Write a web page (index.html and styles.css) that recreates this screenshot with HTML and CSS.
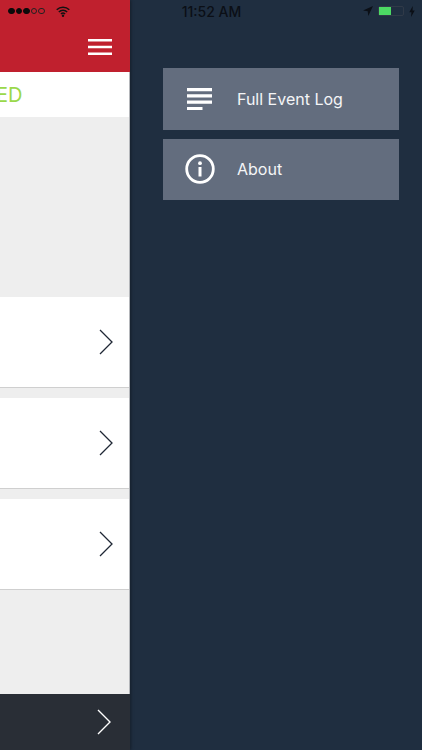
FILE: index.html
```
<!DOCTYPE html>
<html lang="en">
<head>
<meta charset="utf-8">
<title>Menu</title>
<link rel="stylesheet" href="styles.css">
</head>
<body>
<div class="app">
  <section class="main">
    <header class="topbar">
      <svg class="burger" width="24" height="16" viewBox="0 0 24 16"><path d="M0 1.300h24M0 8h24M0 14.700h24" stroke="#fff" stroke-width="2.500" fill="none"/></svg>
    </header>
    <div class="status-row"><span class="status-text">ED</span></div>
    <div class="list">
      <div class="item"><svg class="chev" width="14" height="26" viewBox="0 0 14 26"><path d="M1 1l12 12L1 25" stroke="#1f2735" stroke-width="1.300" fill="none"/></svg></div>
      <div class="item"><svg class="chev" width="14" height="26" viewBox="0 0 14 26"><path d="M1 1l12 12L1 25" stroke="#1f2735" stroke-width="1.300" fill="none"/></svg></div>
      <div class="item"><svg class="chev" width="14" height="26" viewBox="0 0 14 26"><path d="M1 1l12 12L1 25" stroke="#1f2735" stroke-width="1.300" fill="none"/></svg></div>
    </div>
    <footer class="footbar"><svg class="chev" width="14" height="26" viewBox="0 0 14 26"><path d="M1 1l12 12L1 25" stroke="#fff" stroke-width="1.400" fill="none"/></svg></footer>
  </section>
  <nav class="drawer">
    <a class="menu-item">
      <span class="menu-icon"><svg width="25" height="22" viewBox="0 0 25 22"><path d="M0 1.600h25M0 7.900h25M0 14.200h25M0 20.500h15.500" stroke="#fff" stroke-width="3.200" fill="none"/></svg></span>
      <span class="menu-label">Full Event Log</span>
    </a>
    <a class="menu-item">
      <span class="menu-icon"><svg width="30" height="30" viewBox="0 0 30 30"><circle cx="15" cy="15" r="13.300" stroke="#fff" stroke-width="2.800" fill="none"/><rect x="13.500" y="13" width="3" height="9.500" fill="#fff"/><circle cx="15" cy="9.200" r="1.900" fill="#fff"/></svg></span>
      <span class="menu-label">About</span>
    </a>
  </nav>
</div>
<div class="statusbar">
  <div class="sb-left">
    <span class="signal"><i class="dot"></i><i class="dot"></i><i class="dot"></i><i class="dot off"></i><i class="dot off"></i></span>
    <svg width="14" height="11" viewBox="0 0 14 11"><path d="M.7 3.800a9 9 0 0 1 12.600 0M2.800 5.900a6 6 0 0 1 8.400 0M4.900 8a3 3 0 0 1 4.200 0" stroke="#111" stroke-width="1.400" fill="none"/><circle cx="7" cy="9.700" r="1.200" fill="#111"/></svg>
  </div>
  <span class="sb-time">11:52 AM</span>
  <div class="sb-right">
    <svg width="10" height="10" viewBox="0 0 10 10"><path d="M10 0L0 4.600l4.700.6.600 4.800z" fill="#0b0f16"/></svg>
    <span class="battery"><span class="battery-fill"></span></span>
    <svg width="6" height="11" viewBox="0 0 5 10"><path d="M3.200 0L0 5.600h2L1.600 10 5 4.200H3z" fill="#0b0f16"/></svg>
  </div>
</div>
</body>
</html>
```
FILE: styles.css
```
* { box-sizing: border-box; }
html, body { margin: 0; padding: 0; height: 100%; }
body { width: 422px; height: 750px; overflow: hidden; position: relative; background: #1f2e40; font-family: Inter, Roboto, "Liberation Sans", sans-serif; }
.app { display: flex; height: 750px; }
.main { width: 130px; flex: none; display: flex; flex-direction: column; background: #eeeeee; box-shadow: 1px 0 3px rgba(0, 0, 0, .35); }
.topbar { height: 72px; flex: none; background: #c0202e; display: flex; align-items: flex-end; justify-content: flex-end; padding: 0 18px 17px 0; }
.status-row { height: 45px; flex: none; background: #fff; display: flex; align-items: center; border-right: 1px solid #b4b6ba; overflow: hidden; }
.status-text { font-family: Inter, Lato, sans-serif; font-size: 20px; line-height: 1; color: #9ad84a; margin-left: -4px; }
.list { flex: 1; padding-top: 180px; display: flex; flex-direction: column; gap: 10px; background: #eeeeee; border-right: 1px solid #b4b6ba; }
.item { height: 91px; background: #fff; border-bottom: 1px solid #cfcfcf; display: flex; align-items: center; justify-content: flex-end; padding: 0 16px 0 0; }
.footbar { height: 56px; flex: none; background: #292e36; display: flex; align-items: center; justify-content: flex-end; padding-right: 19px; }
.drawer { flex: 1; padding: 68px 23px 0 33px; display: flex; flex-direction: column; gap: 9px; }
.menu-item { height: 61.500px; background: #636d7e; display: flex; align-items: center; color: #fff; }
.menu-icon { width: 74px; flex: none; display: flex; justify-content: center; padding-right: 1px; }
.menu-label { font-size: 16px; color: #f4f5f7; }
.statusbar { position: absolute; left: 0; top: 0; width: 422px; height: 22px; display: grid; grid-template-columns: 1fr auto 1fr; align-items: center; padding: 0 7px 0 8px; }
.sb-left { display: flex; align-items: center; gap: 11px; }
.signal { display: flex; gap: 1px; }
.dot { width: 6.500px; height: 6.500px; border-radius: 50%; background: #0a0a0a; border: 1px solid #0a0a0a; }
.dot.off { background: transparent; border: .7px solid #222; }
.sb-time { font-size: 14px; font-weight: 500; color: #0b0f16; }
.sb-right { display: flex; align-items: center; justify-content: flex-end; gap: 5px; }
.battery { width: 26px; height: 10px; border: 1px solid #303a48; border-radius: 2px; display: block; }
.battery-fill { display: block; width: 12px; height: 100%; background: #4cd964; }
```
